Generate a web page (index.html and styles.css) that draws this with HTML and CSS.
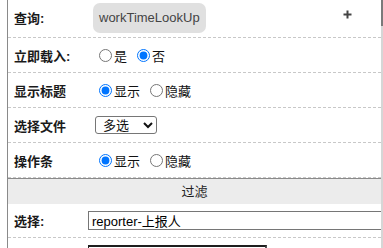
FILE: index.html
```html
<!DOCTYPE html>
<html>
<head>
<meta charset="utf-8">
<link rel="stylesheet" href="styles.css">
</head>
<body>
<div class="frame">
  <div class="panel">
    <div class="row row-first">
      <span class="label">查询:</span>
      <span class="pill">workTimeLookUp</span>
      <svg class="plus" width="9" height="9" viewBox="0 0 9 9"><path d="M4.5 0.5v8M0.5 4.5h8" stroke="#444" stroke-width="2"/></svg>
    </div>
    <div class="row">
      <span class="label">立即载入:</span>
      <label class="opt"><input type="radio" name="load">是</label>
      <label class="opt"><input type="radio" name="load" checked>否</label>
    </div>
    <div class="row">
      <span class="label">显示标题</span>
      <label class="opt"><input type="radio" name="title" checked>显示</label>
      <label class="opt"><input type="radio" name="title">隐藏</label>
    </div>
    <div class="row">
      <span class="label">选择文件</span>
      <select class="sel"><option>多选</option><option>单选</option></select>
    </div>
    <div class="row">
      <span class="label">操作条</span>
      <label class="opt"><input type="radio" name="bar" checked>显示</label>
      <label class="opt"><input type="radio" name="bar">隐藏</label>
    </div>
    <div class="section">过滤</div>
    <div class="row row-filter">
      <span class="label label-short">选择:</span>
      <input class="field" type="text" value="reporter-上报人">
    </div>
    <div class="row-next">
      <div class="darkbox"></div>
    </div>
  </div>
  <div class="track"><div class="thumb"></div></div>
</div>
</body>
</html>
```

FILE: styles.css
```css
html, body {
  margin: 0;
  padding: 0;
  background: #fff;
  overflow: hidden;
}
body {
  font-family: "Liberation Sans", "Noto Sans CJK SC", sans-serif;
  font-size: 13px;
  color: #111;
  width: 383px;
  height: 248px;
}
.frame {
  display: flex;
  height: 248px;
  margin-left: 7px;
  border-left: 1px solid #8a8a8a;
  overflow: hidden;
}
.panel {
  flex: 1;
  display: flex;
  flex-direction: column;
  min-width: 0;
}
.track {
  width: 2px;
  background: #d6d6d6;
  display: flex;
  flex-direction: column;
}
.thumb {
  height: 26px;
  background: #7a7a7a;
}
.row {
  display: flex;
  align-items: center;
  height: 34px;
  flex: none;
  border-bottom: 1px dashed #c8c8c8;
  padding-left: 6px;
}
.row-first {
  height: 35px;
  padding-bottom: 2px;
}
.label {
  width: 80px;
  flex: none;
  font-weight: bold;
  color: #1a1a1a;
}
.label-short {
  width: 74px;
}
.pill {
  background: #e0e0e0;
  border-radius: 7px;
  height: 30px;
  line-height: 30px;
  padding: 0 6px;
  margin-left: -1px;
  color: #444;
}
.plus {
  margin-left: auto;
  margin-right: 29px;
  align-self: flex-start;
  margin-top: 10px;
}
.opt {
  display: flex;
  align-items: center;
  margin-right: 5px;
}
.opt input {
  margin: 0 2px 0 5px;
  width: 13px;
  height: 13px;
}
.sel {
  font-family: inherit;
  font-size: 13px;
  width: 62px;
  height: 18px;
  margin-left: 1px;
  padding: 0 0 0 3px;
  border: 1px solid #767676;
  border-radius: 3px;
  background: #fff;
  color: #111;
}
.section {
  flex: none;
  border-top: 1px solid #8a8a8a;
  background: #ececec;
  height: 25px;
  line-height: 25px;
  text-align: center;
  color: #222;
}
.row-filter {
  height: 33px;
}
.field {
  flex: 1;
  min-width: 0;
  height: 19px;
  box-sizing: border-box;
  border: 1px solid #767676;
  border-right: none;
  padding: 0 0 0 3px;
  font-family: inherit;
  font-size: 13px;
  color: #000;
  margin: 0;
  margin-right: -3px;
}
.row-next {
  flex: none;
  display: flex;
  padding: 7px 0 0 80px;
}
.darkbox {
  width: 176px;
  height: 1px;
  border-top: 2px solid #1e1e1e;
  border-left: 1px solid #1e1e1e;
  border-right: 2px solid #555;
}
```
